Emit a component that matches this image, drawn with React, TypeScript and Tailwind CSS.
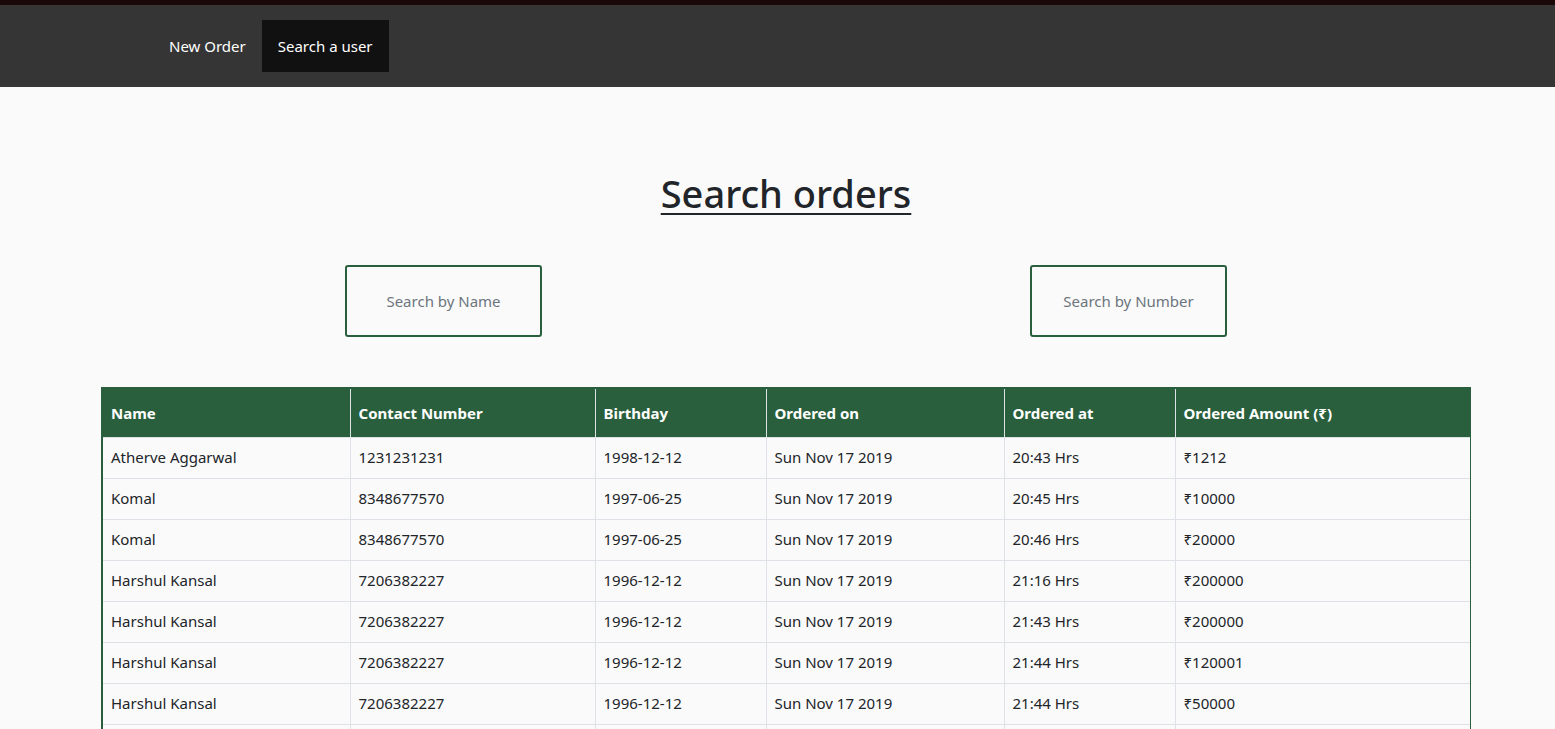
const rows = [
  ['Atherve Aggarwal', '1231231231', '1998-12-12', 'Sun Nov 17 2019', '20:43 Hrs', '₹1212'],
  ['Komal', '8348677570', '1997-06-25', 'Sun Nov 17 2019', '20:45 Hrs', '₹10000'],
  ['Komal', '8348677570', '1997-06-25', 'Sun Nov 17 2019', '20:46 Hrs', '₹20000'],
  ['Harshul Kansal', '7206382227', '1996-12-12', 'Sun Nov 17 2019', '21:16 Hrs', '₹200000'],
  ['Harshul Kansal', '7206382227', '1996-12-12', 'Sun Nov 17 2019', '21:43 Hrs', '₹200000'],
  ['Harshul Kansal', '7206382227', '1996-12-12', 'Sun Nov 17 2019', '21:44 Hrs', '₹120001'],
  ['Harshul Kansal', '7206382227', '1996-12-12', 'Sun Nov 17 2019', '21:44 Hrs', '₹50000'],
  ['', '', '', '', '', ''],
]

const headers = ['Name', 'Contact Number', 'Birthday', 'Ordered on', 'Ordered at', 'Ordered Amount (₹)']
const widths = ['w-[248px]', 'w-[245px]', 'w-[171px]', 'w-[238px]', 'w-[171px]', 'w-[296px]']

export default function App() {
  return (
    <div className="min-h-screen bg-[#fafafa] text-[#212529] font-['Noto_Sans','Open_Sans',sans-serif]">
      <div className="h-[5px] bg-[#1a0809]" />
      <nav className="flex h-[82px] items-center bg-[#353535] pl-[153px]">
        <a className="flex h-[52px] items-center px-4 text-[15px] text-white">New Order</a>
        <a className="flex h-[52px] items-center bg-[#111111] px-4 text-[15px] text-white">Search a user</a>
      </nav>

      <div className="ml-[101px] w-[1370px] overflow-hidden h-[642px]">
        <h1 className="mt-[83px] text-center text-[38px] leading-[46px] font-medium underline decoration-2 underline-offset-[5px]">
          Search orders
        </h1>

        <div className="mt-[49px] grid grid-cols-2">
          <div className="flex justify-center">
            <input
              placeholder="Search by Name"
              className="h-[72px] w-[197px] rounded-[3px] border-2 border-[#2a5f3d] bg-transparent text-center text-[15px] outline-none placeholder:text-[#6c757d]"
            />
          </div>
          <div className="flex justify-center">
            <input
              placeholder="Search by Number"
              className="h-[72px] w-[197px] rounded-[3px] border-2 border-[#2a5f3d] bg-transparent text-center text-[15px] outline-none placeholder:text-[#6c757d]"
            />
          </div>
        </div>

        <table className="mt-[50px] w-[1370px] table-fixed border-collapse border-x-2 border-[#2a5f3d] text-[15px]">
          <thead>
            <tr className="bg-[#2a5f3d] text-white">
              {headers.map((h, i) => (
                <th
                  key={h}
                  className={`${widths[i]} h-[49px] border-t-2 border-t-[#2a5f3d] border-l border-l-[#dee2e6] px-2 text-left font-bold first:border-l-0`}
                >
                  {h}
                </th>
              ))}
            </tr>
          </thead>
          <tbody>
            {rows.map((r, ri) => (
              <tr key={ri}>
                {r.map((c, ci) => (
                  <td key={ci} className="h-[41px] border border-[#dee2e6] px-2 first:border-l-0 last:border-r-0">
                    {c}
                  </td>
                ))}
              </tr>
            ))}
          </tbody>
        </table>
      </div>
    </div>
  )
}
